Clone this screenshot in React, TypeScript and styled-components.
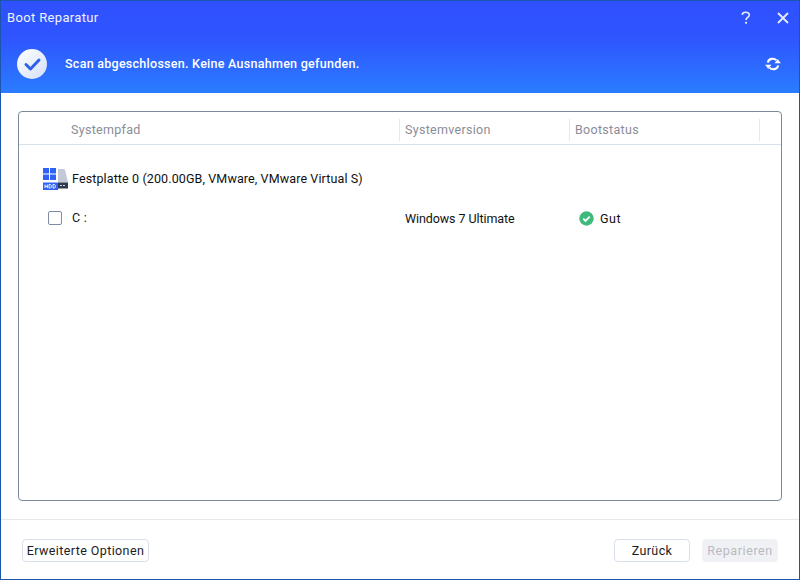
import React from "react";
import styled, { createGlobalStyle } from "styled-components";

const Global = createGlobalStyle`
  html, body { margin: 0; padding: 0; background: #fff; }
  #root { width: 800px; height: 580px; }
`;

const Win = styled.div`
  box-sizing: border-box;
  width: 800px;
  height: 580px;
  display: flex;
  flex-direction: column;
  border: 1px solid #1b55ad;
  background: #fff;
  font-family: Roboto, "Liberation Sans", sans-serif;
  overflow: hidden;
`;
const Banner = styled.div`
  height: 92px;
  flex: none;
  background: linear-gradient(180deg, #2f50ff 0%, #2f55ff 40%, #2a7cff 100%);
  color: #fff;
  display: flex;
  flex-direction: column;
`;
const TitleBar = styled.div`
  height: 33px;
  display: flex;
  align-items: center;
  padding: 0 9px 3px 6px;
`;
const Title = styled.div`
  flex: 1;
  font-size: 13px;
  letter-spacing: 0.35px;
  color: #f0f3ff;
`;
const WinBtn = styled.button`
  border: 0;
  background: none;
  padding: 0;
  width: 14px;
  height: 14px;
  display: flex;
  align-items: center;
  justify-content: center;
  margin-left: 23px;
`;
const Status = styled.div`
  flex: 1;
  display: flex;
  align-items: center;
  padding: 0 18px 3px 16px;
`;
const StatusText = styled.div`
  flex: 1;
  margin-left: 18px;
  font-size: 12.5px;
  font-weight: 500;
  letter-spacing: 0.27px;
`;
const Body = styled.div`
  flex: 1;
  padding: 18px 17px 18px 17px;
  display: flex;
  min-height: 0;
`;
const Panel = styled.div`
  flex: 1;
  box-sizing: border-box;
  border: 1px solid #7a8a9c;
  border-radius: 4px;
  display: flex;
  flex-direction: column;
`;
const HeadRow = styled.div`
  height: 33px;
  flex: none;
  display: grid;
  grid-template-columns: 381px 170px 190px 1fr;
  border-bottom: 1px solid #d8e0ea;
  box-sizing: border-box;
  padding-top: 7px;
`;
const HeadCell = styled.div<{ $first?: boolean }>`
  height: 22px;
  box-sizing: border-box;
  border-right: 1px solid #e4e9f0;
  padding-left: ${(p) => (p.$first ? "52px" : "5px")};
  font-size: 12.5px;
  letter-spacing: 0.3px;
  color: #8a8d96;
  line-height: 21px;
`;
const DiskRow = styled.div`
  display: flex;
  align-items: center;
  margin: 21px 0 0 24px;
  height: 25px;
  font-size: 12.5px;
  letter-spacing: 0.12px;
  color: #111;
`;
const DiskLabel = styled.span`
  margin-left: 4px;
`;
const VolumeRow = styled.div`
  display: grid;
  grid-template-columns: 381px 179px 1fr;
  align-items: center;
  margin-top: 17px;
  height: 20px;
  font-size: 12.5px;
  letter-spacing: -0.08px;
  color: #111;
`;
const VolumeName = styled.div`
  display: flex;
  align-items: center;
  padding-left: 29px;
  letter-spacing: 0.2px;
  margin-top: -1px;
`;
const Check = styled.span`
  box-sizing: border-box;
  width: 14px;
  height: 14px;
  border: 1px solid #7f8aa6;
  border-radius: 2px;
  margin-right: 10px;
  background: #fff;
`;
const VersionCell = styled.div`
  padding-left: 5px;
`;
const StatusCell = styled.div`
  display: flex;
  align-items: center;
  gap: 6px;
  letter-spacing: 0.5px;
`;
const Footer = styled.div`
  height: 60px;
  flex: none;
  box-sizing: border-box;
  border-top: 1px solid #e6e8ec;
  display: flex;
  align-items: center;
  padding: 0 21px 0 21px;
`;
const Btn = styled.button<{ $w: number; $disabled?: boolean }>`
  box-sizing: border-box;
  width: ${(p) => p.$w}px;
  height: 23px;
  padding: 0;
  margin-top: 2px;
  border-radius: 4px;
  border: 1px solid ${(p) => (p.$disabled ? "#f0f1f5" : "#d9e0ec")};
  background: ${(p) => (p.$disabled ? "#f0f1f5" : "#fff")};
  color: ${(p) => (p.$disabled ? "#b8bac0" : "#1c1c24")};
  font-family: Roboto, "Liberation Sans", sans-serif;
  font-size: 12.5px;
  letter-spacing: ${(p) => (p.$disabled ? "0.6px" : "0.4px")};
  & + & { margin-left: 12px; }
`;
const Spacer = styled.div`
  flex: 1;
`;

const CheckBadge = () => (
  <svg width="30" height="30" viewBox="0 0 30 30">
    <defs>
      <linearGradient id="bd" x1="0" y1="0" x2="1" y2="1">
        <stop offset="0" stopColor="#ffffff" />
        <stop offset="1" stopColor="#d3e0f8" />
      </linearGradient>
    </defs>
    <circle cx="15" cy="15" r="15" fill="url(#bd)" />
    <path d="M9 15.5l4.5 4.5 8.5-9" fill="none" stroke="#2f62e8" strokeWidth="3" strokeLinecap="round" strokeLinejoin="round" />
  </svg>
);

const Refresh = () => (
  <svg width="16" height="14" viewBox="0 0 16 14">
    <path d="M2.8 5.6A5 5 0 0 1 11.4 3.4" fill="none" stroke="#fff" strokeWidth="2.1" />
    <path d="M13.2 8.4A5 5 0 0 1 4.6 10.6" fill="none" stroke="#fff" strokeWidth="2.1" />
    <path d="M9.6 6.2h6.2L12.8 2z" fill="#fff" />
    <path d="M6.4 7.8H.2L3.2 12z" fill="#fff" />
  </svg>
);

const HddIcon = () => (
  <svg width="25" height="24" viewBox="0 0 25 24">
    <path d="M15 2h5.5c.8 0 1.3.4 1.6 1L25 15.5H15z" fill="#c3c9d6" />
    <rect x="0" y="1" width="6" height="5.5" fill="#2f62f5" />
    <rect x="7" y="1" width="6" height="5.5" fill="#2f62f5" />
    <rect x="0" y="7.5" width="6" height="5.5" fill="#2f62f5" />
    <rect x="7" y="7.5" width="6" height="5.5" fill="#2f62f5" />
    <rect x="15" y="15.5" width="10" height="6" fill="#2d3a50" />
    <rect x="17" y="18" width="2" height="1" fill="#cfd6e2" />
    <rect x="20" y="18" width="2" height="1" fill="#cfd6e2" />
    <rect x="0" y="15.5" width="15" height="7.5" fill="#2f62f5" />
    <path d="M2 17.5v3.6M4.4 17.5v3.6M2 19.3h2.4M6 17.5h1.5l.7.7v2.2l-.7.7H6zM10 17.5h1.5l.7.7v2.2l-.7.7H10z" fill="none" stroke="#fff" strokeWidth="0.9" />
  </svg>
);

const GoodIcon = () => (
  <svg width="15" height="15" viewBox="0 0 15 15">
    <circle cx="7.5" cy="7.5" r="7.2" fill="#3dba7c" />
    <path d="M4.2 7.6l2.3 2.3 4.2-4.3" fill="none" stroke="#fff" strokeWidth="1.8" />
  </svg>
);

export default function App() {
  return (
    <Win>
      <Global />
      <Banner>
        <TitleBar>
          <Title>Boot Reparatur</Title>
          <WinBtn aria-label="Hilfe">
            <svg width="10" height="14" viewBox="0 0 10 14">
              <path d="M1.2 3.8C1.4 2 2.9 1.2 4.7 1.2c2 0 3.6 1 3.6 2.8 0 2.4-3.3 2.4-3.3 5" fill="none" stroke="#e6ebff" strokeWidth="1.6" />
              <rect x="4.1" y="10.8" width="1.9" height="1.9" fill="#e6ebff" />
            </svg>
          </WinBtn>
          <WinBtn aria-label="Schliessen">
            <svg width="12" height="12" viewBox="0 0 12 12">
              <path d="M1 1l10 10M11 1L1 11" stroke="#e6ebff" strokeWidth="1.8" />
            </svg>
          </WinBtn>
        </TitleBar>
        <Status>
          <CheckBadge />
          <StatusText>Scan abgeschlossen. Keine Ausnahmen gefunden.</StatusText>
          <Refresh />
        </Status>
      </Banner>
      <Body>
        <Panel>
          <HeadRow>
            <HeadCell $first>Systempfad</HeadCell>
            <HeadCell>Systemversion</HeadCell>
            <HeadCell>Bootstatus</HeadCell>
          </HeadRow>
          <DiskRow>
            <HddIcon />
            <DiskLabel>Festplatte 0 (200.00GB, VMware, VMware Virtual S)</DiskLabel>
          </DiskRow>
          <VolumeRow>
            <VolumeName>
              <Check />C :
            </VolumeName>
            <VersionCell>Windows 7 Ultimate</VersionCell>
            <StatusCell>
              <GoodIcon />
              Gut
            </StatusCell>
          </VolumeRow>
        </Panel>
      </Body>
      <Footer>
        <Btn $w={127}>Erweiterte Optionen</Btn>
        <Spacer />
        <Btn $w={76}>Zurück</Btn>
        <Btn $w={76} $disabled>Reparieren</Btn>
      </Footer>
    </Win>
  );
}
